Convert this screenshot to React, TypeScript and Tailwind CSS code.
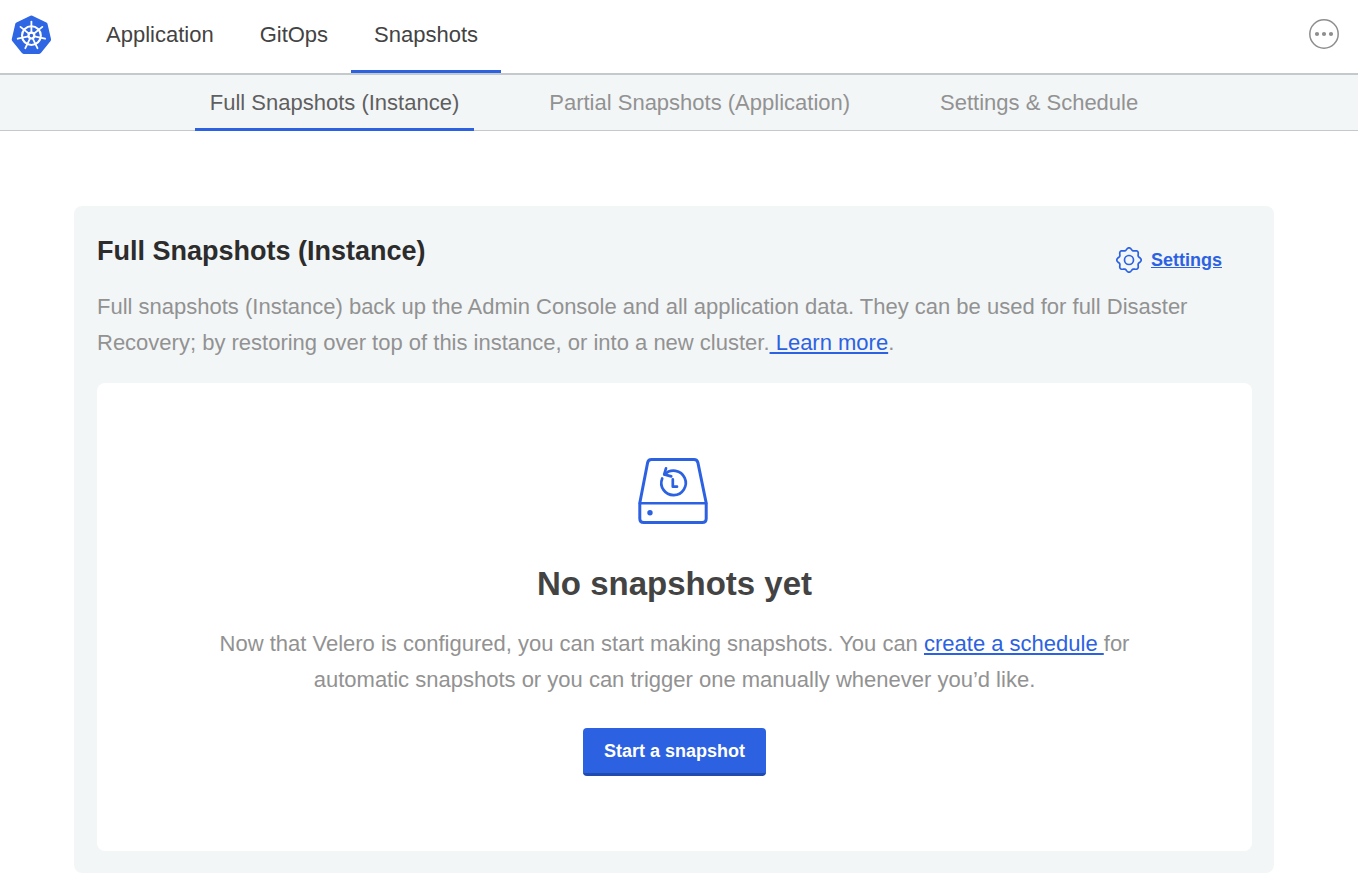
import type { ReactNode } from "react";

function polar(cx: number, cy: number, r: number, deg: number): [number, number] {
  const a = (deg * Math.PI) / 180;
  return [cx + r * Math.sin(a), cy - r * Math.cos(a)];
}

const SPOKES = [0, 1, 2, 3, 4, 5, 6].map((i) => (i * 360) / 7);

function KubernetesLogo() {
  return (
    <svg className="h-10 w-10" viewBox="0 0 40 40" aria-hidden="true">
      <polygon
        points={SPOKES.map((d) => polar(20.4, 20.6, 17.9, d).join(",")).join(" ")}
        fill="#2f66e3"
        stroke="#2f66e3"
        strokeWidth="4.4"
        strokeLinejoin="round"
      />
      <circle cx="20.4" cy="20.6" r="9.4" fill="none" stroke="#fff" strokeWidth="2.1" />
      {SPOKES.map((d) => {
        const [x1, y1] = polar(20.4, 20.6, 3, d);
        const [x2, y2] = polar(20.4, 20.6, 14, d);
        return <line key={d} x1={x1} y1={y1} x2={x2} y2={y2} stroke="#fff" strokeWidth="1.8" strokeLinecap="round" />;
      })}
      <circle cx="20.4" cy="20.6" r="2.9" fill="none" stroke="#fff" strokeWidth="2.2" />
    </svg>
  );
}

const GEAR_PATH =
  Array.from({ length: 120 }, (_, i) => {
    const deg = i * 3;
    const wave = Math.cos((8 * deg * Math.PI) / 180);
    const [x, y] = polar(14, 14, 11.1 + 1.1 * wave, deg);
    return `${i === 0 ? "M" : "L"}${x.toFixed(2)} ${y.toFixed(2)}`;
  }).join("") + "Z";

function GearIcon() {
  return (
    <svg className="h-7 w-7" viewBox="0 0 28 28" fill="none" stroke="#2c62e2" strokeWidth="1.7" aria-hidden="true">
      <path d={GEAR_PATH} strokeLinejoin="round" />
      <circle cx="14" cy="14" r="4.5" />
    </svg>
  );
}

function SnapshotDiskIcon() {
  return (
    <svg
      className="mr-1 h-[66px] w-[70px]"
      viewBox="0 0 70 66"
      fill="none"
      stroke="#2c62e2"
      strokeWidth="3"
      strokeLinecap="round"
      strokeLinejoin="round"
      aria-hidden="true"
    >
      <path d="M13.5 1.6H56Q59.2 1.6 59.9 4.7L68.2 45V60.4Q68.2 64.4 64.2 64.4H5.8Q1.8 64.4 1.8 60.4V45L9.6 4.7Q10.3 1.6 13.5 1.6Z" />
      <path d="M2 45.2H68" strokeWidth="2.6" />
      <circle cx="12" cy="54.7" r="2.7" fill="#2c62e2" stroke="none" />
      <path d="M24.2 20.4A12.2 12.2 0 1 0 26.6 16.6" strokeWidth="2.7" />
      <path d="M28 10.4L26.2 16.4L33.2 18.4" strokeWidth="2.7" />
      <path d="M34.8 21.4V28.7H39" strokeWidth="2.7" />
    </svg>
  );
}

function MoreIcon() {
  return (
    <svg className="h-8 w-8" viewBox="0 0 32 32" aria-hidden="true">
      <circle cx="16" cy="16" r="14.2" fill="none" stroke="#8e8e8e" strokeWidth="1.5" />
      <circle cx="9" cy="16" r="2.1" fill="#8e8e8e" />
      <circle cx="16" cy="16" r="2.1" fill="#8e8e8e" />
      <circle cx="23" cy="16" r="2.1" fill="#8e8e8e" />
    </svg>
  );
}

function NavTab({ active, children }: { active?: boolean; children: ReactNode }) {
  return (
    <a
      href="#"
      className={
        active
          ? "flex items-center border-b-3 border-[#2c62e2] px-[23px] text-[#434343]"
          : "flex items-center border-b-3 border-transparent px-[23px] text-[#434343]"
      }
    >
      {children}
    </a>
  );
}

function SubTab({ active, children }: { active?: boolean; children: ReactNode }) {
  return (
    <a
      href="#"
      className={
        active
          ? "-mb-px flex items-center border-b-3 border-[#2c62e2] px-[15px] pt-0.5 text-[#5f5f5f]"
          : "-mb-px flex items-center border-b-3 border-transparent px-[15px] pt-0.5 text-[#929292]"
      }
    >
      {children}
    </a>
  );
}

export default function App() {
  return (
    <div className="min-h-screen bg-white font-['Liberation_Sans',Arial,sans-serif] text-[22px] leading-9">
      <header className="flex h-[75px] justify-between border-b-2 border-[#c4c9cc] pr-[18px] pl-[11px]">
        <div className="flex">
          <a href="#" aria-label="Home" className="mr-8 flex items-center pb-[3px]">
            <KubernetesLogo />
          </a>
          <nav aria-label="Main" className="flex">
            <NavTab>Application</NavTab>
            <NavTab>GitOps</NavTab>
            <NavTab active>Snapshots</NavTab>
          </nav>
        </div>
        <button type="button" aria-label="More options" className="flex items-center pb-[5px]">
          <MoreIcon />
        </button>
      </header>

      <nav aria-label="Snapshots" className="flex h-14 justify-center gap-[60px] border-b border-[#c4c9cc] bg-[#f3f6f7] pr-2.5">
        <SubTab active>Full Snapshots (Instance)</SubTab>
        <SubTab>Partial Snapshots (Application)</SubTab>
        <SubTab>Settings &amp; Schedule</SubTab>
      </nav>

      <main className="pt-[75px] pr-[84px] pb-[23px] pl-[74px]">
        <section className="mx-auto max-w-[1200px] rounded-lg bg-[#f3f6f7] pt-[27px] pr-[22px] pb-[22px] pl-[23px]">
          <div className="flex items-start justify-between pr-[30px]">
            <h1 className="text-[27px] font-bold text-[#2c2c2c]">Full Snapshots (Instance)</h1>
            <a href="#" className="mt-[13px] flex items-center gap-2 text-lg leading-7 font-bold text-[#2c62e2] underline">
              <GearIcon />
              Settings
            </a>
          </div>
          <p className="mt-[15px] text-[#929292]">
            Full snapshots (Instance) back up the Admin Console and all application data. They can be used for full Disaster
            Recovery; by restoring over top of this instance, or into a new cluster.
            <a href="#" className="text-[#2c62e2] underline">{" Learn more"}</a>.
          </p>
          <div className="mt-[22px] flex flex-col items-center rounded-lg bg-white px-[100px] pt-[75px] pb-[75px] text-center">
            <SnapshotDiskIcon />
            <h2 className="mt-10 text-[33px] leading-10 font-bold text-[#434343]">No snapshots yet</h2>
            <p className="mt-[22px] max-w-[940px] text-[#929292]">
              Now that Velero is configured, you can start making snapshots. You can{" "}
              <a href="#" className="text-[#2c62e2] underline">{"create a schedule "}</a>
              for automatic snapshots or you can trigger one manually whenever you’d like.
            </p>
            <button
              type="button"
              className="mt-[30px] h-12 rounded border-b-3 border-[#224bae] bg-[#2c62e2] px-[21px] text-lg leading-6 font-bold text-white"
            >
              Start a snapshot
            </button>
          </div>
        </section>
      </main>
    </div>
  );
}
